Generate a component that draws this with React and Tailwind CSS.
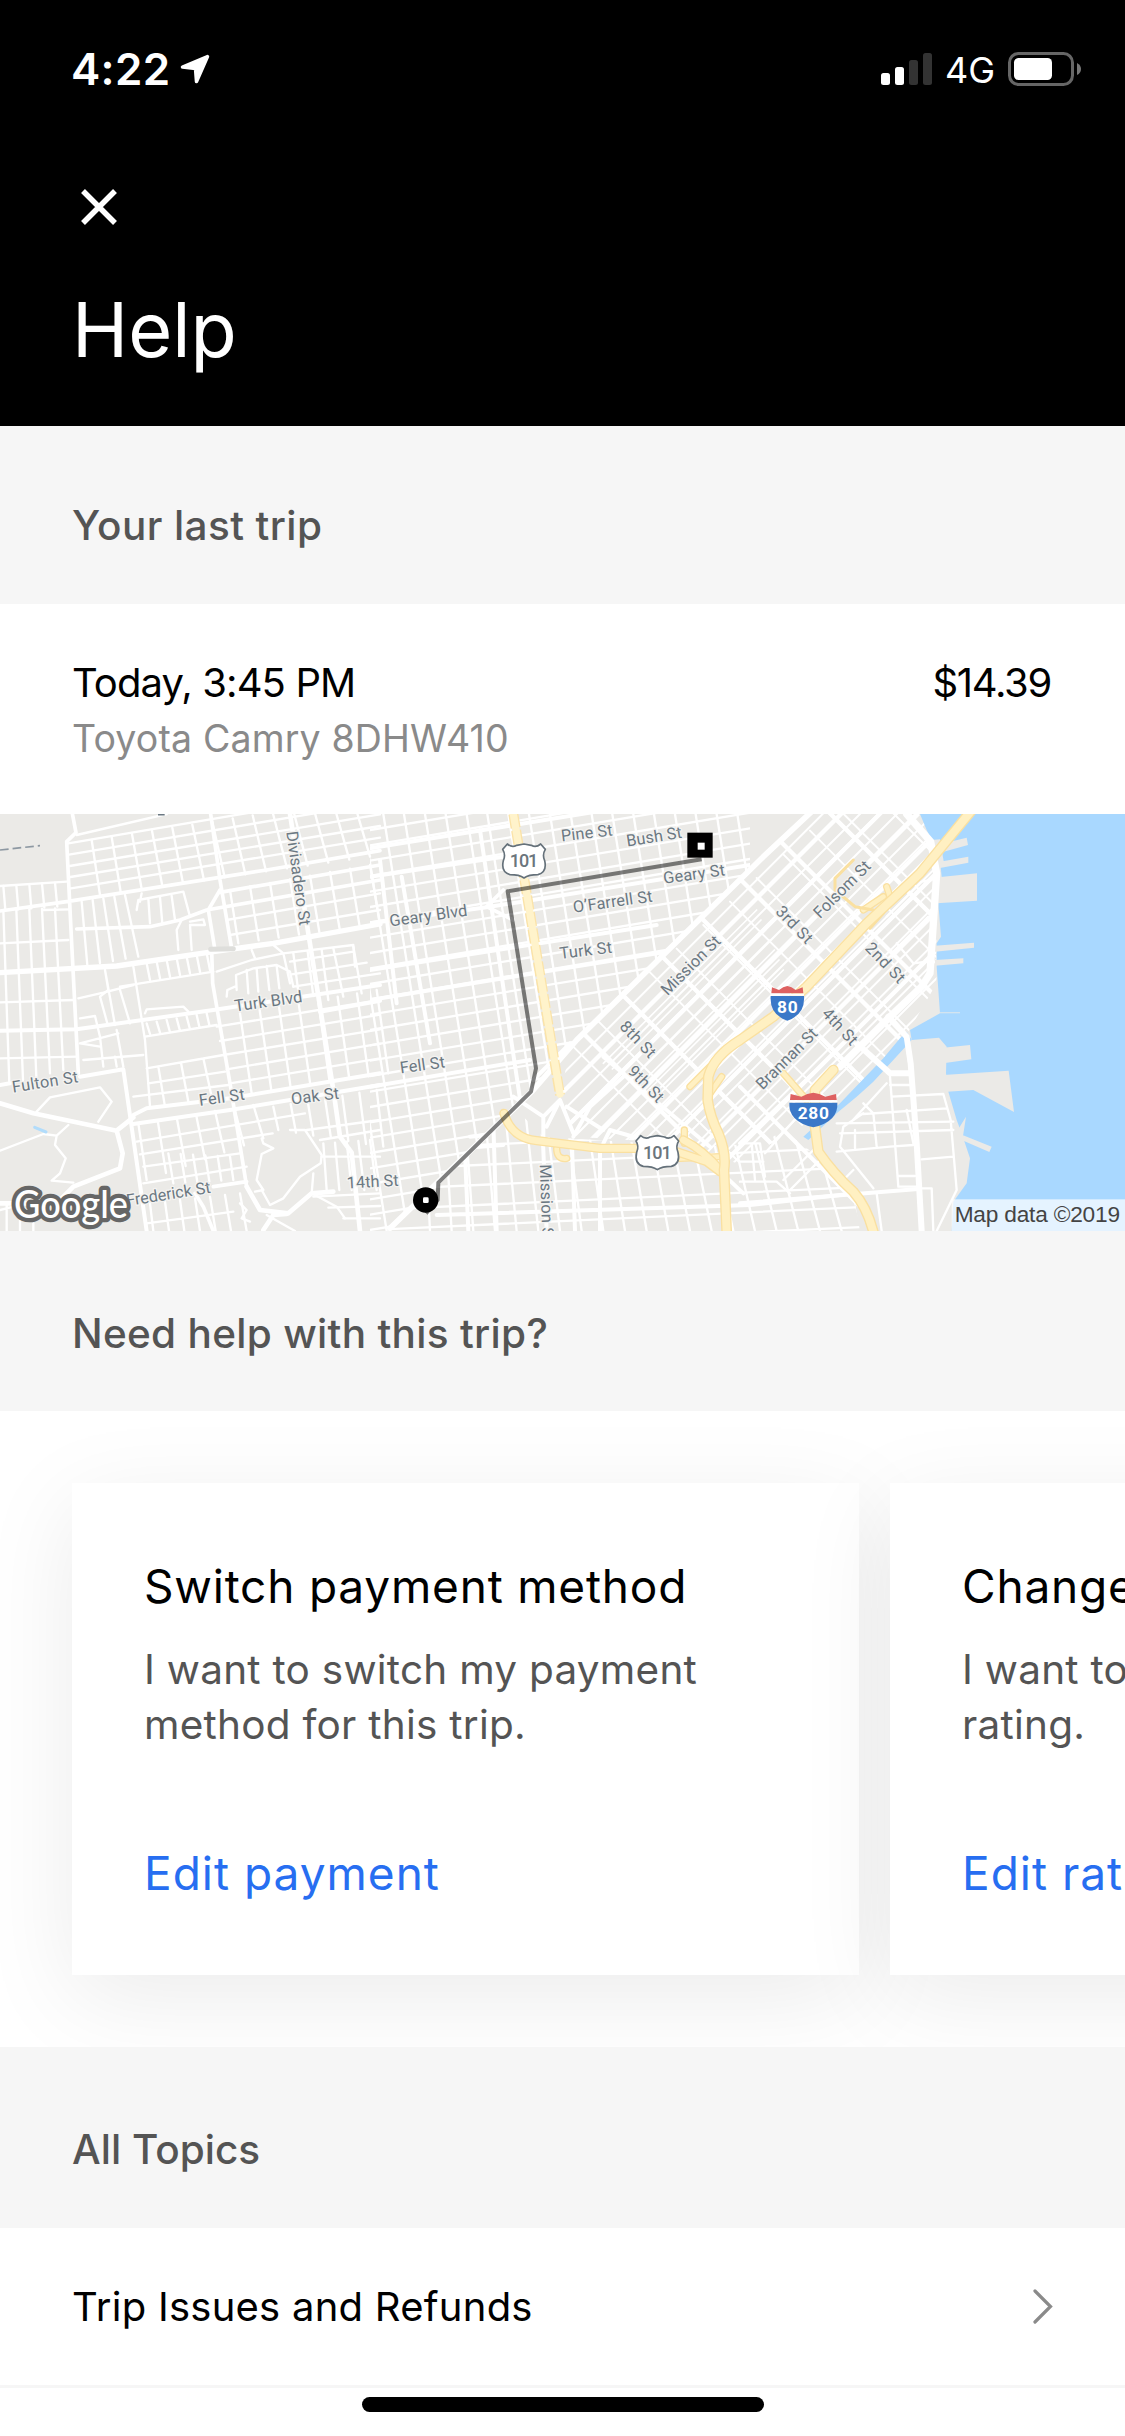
import React from "react";

const fam = (a, b, n) =>
  Array.from({ length: n + 1 }, (_, i) => {
    const p = a.map((v, k) => Math.round(v + ((b[k] - v) * i) / n));
    return `M${p[0]} ${p[1]}L${p[2]} ${p[3]}`;
  }).join("");

const S = ({ d, w = 8, c = "#fff" }) => (
  <path d={d} fill="none" stroke={c} strokeWidth={w} strokeLinejoin="round" strokeLinecap="round" />
);

const Label = ({ x, y, r = 0, w, size = 49, children }) => (
  <text
    transform={`translate(${x} ${y}) rotate(${r})`}
    textAnchor="middle"
    dominantBaseline="central"
    fontSize={size}
    textLength={w}
    fill="#6b7882"
    stroke="#f4f3f1"
    strokeWidth="8"
    strokeLinejoin="round"
    paintOrder="stroke"
  >
    {children}
  </text>
);

const Shield101 = ({ x, y }) => (
  <g transform={`translate(${x} ${y})`}>
    <path
      d="M-50 -50 Q-36 -38 -22 -46 L0 -50 L22 -46 Q36 -38 50 -50 L64 -34 Q54 -18 62 0 Q70 34 42 42 Q14 42 0 52 Q-14 42 -42 42 Q-70 34 -62 0 Q-54 -18 -64 -34 Z"
      fill="#fff" stroke="#65717a" strokeWidth="5" strokeLinejoin="round"
    />
    <text textAnchor="middle" y="20" fontSize="54" fontWeight="500" textLength="86" fill="#6b757c">101</text>
  </g>
);

const Interstate = ({ x, y, w, label, tl }) => (
  <g transform={`translate(${x} ${y})`}>
    <path d={`M${-w} -22 H${w} Q${w + 4} 34 0 52 Q${-w - 4} 34 ${-w} -22Z`} fill="#3a78c8" />
    <path d={`M${-w + 4} -48 L${-w / 2} -40 L${-w / 4} -48 L0 -52 L${w / 4} -48 L${w / 2} -40 L${w - 4} -48 L${w - 2} -30 H${-w + 2}Z`} fill="#de6161" />
    <path d={`M${-w} -26 H${w}`} stroke="#fff" strokeWidth="6" />
    <text textAnchor="middle" y="28" fontSize="52" fontWeight="700" textLength={tl} fill="#fff">{label}</text>
  </g>
);

const Highway = ({ d, w }) => (
  <>
    <S d={d} w={w + 8} c="#fae0a0" />
    <S d={d} w={w} c="#fff0c2" />
  </>
);

/* Trip map: three side-by-side tiles, 1110 units apart, three units per pixel */
function TripMap() {
  return (
    <svg viewBox="0 12 3375 1251" className="block h-[417px] w-full" fontFamily="Roboto, sans-serif">
      <defs>
        <clipPath id="west"><path d="M0 0H1140V170L560 750L490 840L60 1263H0Z" /></clipPath>
        <clipPath id="soma"><path d="M1140 175L600 715L570 860L620 980L930 1000L1100 1060L1310 940L1500 820L1600 690L1700 520V100L1640 0H1310Z" /></clipPath>
        <clipPath id="mission"><path d="M205 1120L430 890L520 980L1000 1010L1180 1000L1240 960L1330 1030L1450 1150L1470 1263H60Z" /></clipPath>
      </defs>
      <rect y="12" width="3375" height="1251" fill="#ebeae7" />

      {/* Western neighbourhoods */}
      <g>
        <S w={7} d={fam([10, 300, 28, 820], [165, 295, 190, 780], 4) + fam([10, 228, 16, 300], [165, 218, 172, 290], 4)} />
        <S w={7} d="M0 228L200 215M0 400L205 390M0 577L220 570M0 745L230 740M130 300L210 298" />
        <S w={7} d={fam([245, 275, 262, 465], [375, 255, 415, 440], 4)} />
        <S w={7} d={fam([205, 100, 1140, -58], [213, 235, 1140, 83], 4)} />
        <S w={7} d={fam([275, 90, 300, 255], [1060, -30, 1110, 140], 13)} />
        <S w={7} d={fam([690, 240, 715, 400], [1110, 165, 1140, 340], 7)} />
        <S w={7} d="M680 330L1140 250M690 375L1140 300M410 300L415 270L550 245L570 320M420 275L425 250M445 265L450 340M480 262L487 340M515 258L525 330M535 420L530 360L545 330M570 345L575 420M570 345L615 345L610 328L570 335" />
        <S w={7} d={fam([440, 460, 450, 510], [620, 430, 630, 480], 6) + "M360 530L640 485M235 565L310 548L400 525M400 470L435 690L450 890"} />
        <S w={7} d={fam([315, 480, 345, 645], [360, 540, 390, 640], 1) + "M315 480L325 540L300 560L322 640M435 610L440 598L550 590L565 605"} />
        <S w={7} d={fam([440, 640, 450, 672], [620, 610, 628, 645], 6) + "M435 680L650 645M240 625L285 618L300 680L310 770M240 700L355 670M250 750L430 735M350 660L370 770M240 700L300 710M345 740L350 770"} />
        <S w={7} d={fam([475, 770, 495, 890], [610, 745, 635, 860], 2) + "M440 775L670 735M445 820L675 785M400 860L685 825"} />
        <S w={7} d="M650 485L755 450L850 430L1060 405L1065 470M710 540L708 495L760 475L830 465L870 485L880 530M680 560L682 540L705 530M755 420L765 445M820 405L850 430L870 520M740 480L745 550M770 475L775 545M800 468L808 540M830 468L838 535" />
        <S w={7} d={fam([880, 430, 895, 545], [965, 420, 985, 570], 2) + fam([870, 455, 1060, 425], [880, 530, 1140, 490], 2) + "M1000 415L1030 560M1060 410L1085 550"} />
        <S w={7} d={fam([720, 610, 755, 850], [1130, 540, 1165, 790], 7)} />
        <S w={7} d={fam([650, 650, 1140, 570], [690, 820, 1140, 745], 4)} />
        <S w={7} d={fam([415, 940, 440, 1110], [760, 885, 790, 985], 6)} />
        <S w={7} d={fam([410, 995, 915, 910], [430, 1070, 720, 1030], 2) + fam([505, 1030, 520, 1120], [690, 1040, 700, 1110], 5)} />
        <S w={7} d={fam([820, 890, 835, 960], [1130, 840, 1150, 1010], 6) + "M920 960L1140 930M960 990L1140 960M965 1040H1140"} />
        <S w={7} d={fam([970, 1000, 980, 1140], [1110, 990, 1130, 1140], 4) + fam([450, 1180, 460, 1263], [720, 1150, 740, 1263], 6) + "M440 1240L700 1205M430 1120L740 1070"} />
        <S w={7} d={fam([940, 1160, 1140, 1150], [1030, 1225, 1140, 1225], 2) + "M20 1180V1263M0 1200L40 1190M60 1263V1225M100 1263V1240"} />
        <S w={7} d="M110 905L150 862L300 832L335 875L295 935M0 1022L130 972L170 977L205 945M170 977L165 1005L197 1045L180 1090L155 1112L220 1118" />
        <S w={7} d="M785 985L790 1000L820 1015L785 1032L770 1110L790 1140L765 1145M785 1140L810 1185L850 1165L900 1100L962 1060L965 1035L915 960L870 960M935 1150L940 1090M720 1180L740 1200L725 1225L750 1235M800 1215L885 1263M935 1150L1010 1190L1035 1225" />
        <S w={11} d="M632 12L660 210L695 415M660 240L625 300L645 420M635 420L638 520L690 820L740 1130M585 1150L610 1190L640 1263M640 1130L740 1115" />
        <S w={11} d="M230 357L450 350L540 330L620 300L1140 210M660 247L1140 165" />
        <S w={11} d="M0 303L200 275L640 205L800 180L1140 122M215 0L228 68L200 95L215 400L235 790" />
        <S w={7} d="M230 75L500 12" />
        <S w={16} d="M0 488L350 468L640 425L820 400L1140 342" />
        <S w={12} d="M0 662L230 658L640 600L1140 525M960 605L1140 572M240 800L370 778L440 1263M0 825L30 820" />
        <S w={12} d="M400 915L440 895L690 865L1140 790M400 942L690 900L870 870L1140 825" />
        <S w={14} d="M870 12L925 370L1000 840L1020 980L1055 1028L1080 1263" />
        <S w={14} d="M0 880L100 910L350 962L400 922M350 962L368 1030L360 1075L220 1130L170 1180L0 1180M740 1130L780 1200L865 1210L935 1150L1000 1145M860 1212L820 1215L790 1260" />
        <S w={15} d="M632 418L700 416" c="#dededb" />
        <S w={9} d="M104 952L138 966" c="#b1dcfb" />
        <path d="M0 120L120 107" stroke="#8d98a2" strokeWidth="5" strokeDasharray="26 12" fill="none" />
        <path d="M474 13H494" stroke="#6b7882" strokeWidth="7" />
      </g>

      {/* Downtown grid, south of Market, Mission */}
      <g transform="translate(1110 0)">
        <g clipPath="url(#west)">
          <S w={7} d={fam([0, 60, 1140, -130], [0, 1260, 1140, 1070], 26)} />
          <S w={7} d={fam([-150, 0, 50, 1263], [1100, 0, 1300, 1263], 20)} />
          <S w={12} d="M0 115L1140 -70M0 200L400 140M0 340L350 292L1140 165M0 570L400 505L1140 385M0 830L480 750M0 480L860 345M30 150L80 580M95 200L180 700M330 60L410 600L470 1000M300 980L500 960" />
          <S w={11} d="M350 290L430 330M350 290L400 240" />
        </g>
        <g clipPath="url(#soma)">
          <S w={6} d={fam([500, 870, 1500, -130], [500, 1760, 2000, 260], 16)} />
          <S w={5} d={fam([700, 760, 1160, 300], [860, 860, 1240, 480], 6)} />
          <S w={6} d={fam([600, 700, 1100, 1200], [1480, -80, 2080, 520], 11)} />
          <S w={13} d={fam([560, 865, 1600, -175], [560, 1560, 2000, 120], 6)} />
          <S w={13} d={fam([560, 590, 1160, 1190], [1340, -30, 1900, 530], 6)} />
        </g>
        <g clipPath="url(#mission)">
          <S w={7} d={fam([160, 850, 180, 1263], [1360, 850, 1480, 1263], 20)} />
          <S w={7} d={fam([0, 1020, 1500, 950], [0, 1320, 1500, 1250], 5)} />
          <S w={12} d="M285 1030L295 1263M370 940L380 1263M515 900L530 1263M605 980L615 1263M690 1020L690 1263M200 1020L400 1005M200 1215L1140 1185L1500 1145" />
        </g>
        <S w={17} d="M60 1255L205 1115L490 840L620 690L1180 140L1330 0" />
        <S w={12} d="M430 860L520 920L570 870L610 970M520 920V990M570 870L530 950M490 810L600 700M700 1000L720 960L860 1000M610 980L660 890L760 800" />
        <S w={12} d="M590 890L700 960M940 980L1120 1150M700 740L1020 1010" />
      </g>

      {/* Waterfront */}
      <g transform="translate(2220 0)">
        <path fill="#a9d8ff" d="M540 12L560 60L578 95L600 150L605 200L595 280L603 380L590 400L590 470L600 610L510 660L515 690L597 683L620 710L618 790L625 845L650 930L665 970L690 1045L680 1120L640 1175L635 1263H1160V12Z" />
        <path fill="#a9d8ff" d="M500 665L515 690L400 815L350 860L290 910L205 990L190 980L300 880L430 745L480 685Z" />
        <path fill="#ebeae7" d="M590 105L680 83L684 105L600 128ZM600 155L685 140V158L600 174ZM595 202L711 190V272L590 280ZM585 407L702 398V413L585 425ZM585 450L670 445V460L585 467ZM610 713L690 705L694 748L610 760ZM610 795L806 782L822 906L700 840L610 846ZM660 972L755 1010L748 1026L665 990ZM650 965L678 920L668 985ZM575 90L600 88L612 160H590Z" />
        <path d="M600 608H660" stroke="#d3e4f0" strokeWidth="4" />
        <S w={7} d="M450 800L475 1130M370 912L620 895M300 970L640 960M290 940L640 935M400 910L410 1010M345 960V1015M290 1025L450 1010L520 1005M450 825H510M455 860L610 852L632 930L650 1140L590 1263M545 1048L640 1040M475 1098H525M475 1130H540M370 880L400 910M330 940L440 820M370 910L310 950L300 1010L400 1135M340 1080L310 1110M545 1135H575L580 1263M500 900L520 1000" />
        <S w={7} d="M0 1000H60L75 1100M0 1055H70M35 1000L45 1110M75 1030L190 900M130 1110L220 1020M150 1140L250 1040M0 1115H110L150 1150M410 1150L425 1263" />
        <S w={12} d="M0 830L360 1190M0 1000L220 790M450 620L500 680L510 760" />
        <S w={22} d="M500 12L572 95L590 190L570 490L545 530L440 630L300 770" />
        <S w={18} d="M445 620L500 680L512 760L530 1000L545 1263M350 700L450 790H505" />
        <S w={12} d="M0 1180L535 1137" />
        <S w={7} d="M575 210L545 215L440 320M565 320L460 425M470 400L520 460L560 455" />
      </g>

      {/* Highways */}
      <g>
        <path d="M1540 12L1570 190L1680 855" fill="none" stroke="#fbe3a8" strokeWidth="30" strokeDasharray="42 8" />
        <S w={22} d="M1540 12L1570 190L1680 852" c="#fff3cb" />
        <Highway w={14} d="M2070 830L2130 770M2165 800L2130 850M2350 790L2420 870M1670 1015Q1670 1050 1700 1045M2053 960V1000M2040 1045L2160 1040M2590 300L2650 260M2660 230L2670 260" />
        <S w={9} c="#fae0a0" d="M2560 150L2505 205V240L2565 290L2620 300M2610 355L2650 310" />
        <Highway w={20} d="M1512 910Q1535 985 1610 992L1800 1015H2000L2120 1055L2160 1085M2050 990Q2110 1020 2165 1085" />
        <Highway w={24} d="M2920 -5L2760 190L2600 340L2420 530L2320 620L2220 690Q2140 740 2125 800L2123 870Q2130 920 2155 970Q2180 1030 2172 1080L2180 1265" />
        <Highway w={24} d="M2500 780L2445 840L2445 950L2455 1025Q2500 1090 2560 1145Q2600 1190 2620 1265" />
      </g>

      {/* Labels */}
      <Label x={895} y={205} r={82} w={285}>Divisadero St</Label>
      <Label x={805} y={574} r={-8} w={205}>Turk Blvd</Label>
      <Label x={135} y={816} r={-9} w={200}>Fulton St</Label>
      <Label x={665} y={862} r={-8} w={138}>Fell St</Label>
      <Label x={945} y={858} r={-7} w={145}>Oak St</Label>
      <Label x={505} y={1152} r={-9} w={255}>Frederick St</Label>
      <Label x={1118} y={1115} r={-3} w={156}>14th St</Label>
      <Label x={1285} y={317} r={-8} w={235}>Geary Blvd</Label>
      <Label x={1267} y={765} r={-8} w={136}>Fell St</Label>
      <Label x={1760} y={69} r={-7} w={155}>Pine St</Label>
      <Label x={1962} y={80} r={-9} w={168}>Bush St</Label>
      <Label x={2082} y={192} r={-8} w={186}>Geary St</Label>
      <Label x={1838} y={275} r={-8} w={240}>O’Farrell St</Label>
      <Label x={1757} y={421} r={-7} w={158}>Turk St</Label>
      <Label x={2072} y={466} r={-45} w={230}>Mission St</Label>
      <Label x={1914} y={688} r={46} w={132}>8th St</Label>
      <Label x={1938} y={822} r={46} w={132}>9th St</Label>
      <Label x={1640} y={1180} r={88} w={235}>Mission St</Label>
      <Label x={2383} y={344} r={46} w={136}>3rd St</Label>
      <Label x={2526} y={238} r={-45} w={220}>Folsom St</Label>
      <Label x={2656} y={458} r={46} w={148}>2nd St</Label>
      <Label x={2520} y={650} r={47} w={132}>4th St</Label>
      <Label x={2360} y={746} r={-45} w={238}>Brannan St</Label>

      <Shield101 x={1572} y={152} />
      <Shield101 x={1972} y={1027} />
      <Interstate x={2362} y={580} w={50} label="80" tl={62} />
      <Interstate x={2440} y={900} w={72} label="280" tl={94} />

      {/* Route */}
      <path d="M2105 148L1523 244L1608 775L1593 845L1315 1118L1313 1170L1278 1210" fill="none" stroke="#000" strokeOpacity=".5" strokeWidth="12" strokeLinejoin="round" />
      <rect x="2062" y="68" width="76" height="75" />
      <rect x="2093" y="98" width="21" height="21" fill="#fff" />
      <circle cx="1277" cy="1170" r="38" />
      <rect x="1269" y="1162" width="17" height="17" rx="4" fill="#fff" />

      <text x="42" y="1224" fontFamily="Lato, sans-serif" fontSize="116" fontWeight="500" textLength="342" lengthAdjust="spacingAndGlyphs" fill="#fff" stroke="#666" strokeWidth="26" strokeLinejoin="round" paintOrder="stroke">Google</text>

      <rect x="2855" y="1168" width="520" height="95" fill="#fff" fillOpacity=".7" />
      <text x="2864" y="1237" fontFamily="Liberation Sans, sans-serif" fontSize="68" textLength="496" fill="#444">Map data ©2019</text>
    </svg>
  );
}

function StatusBar() {
  return (
    <div className="-mr-7 flex h-[138px] items-center justify-between">
      <div className="flex items-center gap-2.5">
        <span className="-ml-px text-[44px] leading-none font-semibold tracking-[0.3px]">4:22</span>
        <svg className="h-[30px] w-[30px]" viewBox="0 0 30 30" fill="#fff" stroke="#fff" strokeWidth="3.500" strokeLinejoin="round">
          <path d="M27.500 2.500L2.500 13L15.500 14.500L16.500 27.500Z" />
        </svg>
      </div>
      <div className="flex items-center">
        <svg className="h-8 w-[51px]" viewBox="0 0 51 32">
          <rect y="20" width="9" height="12" rx="2.500" fill="#fff" />
          <rect x="14" y="14" width="9" height="18" rx="2.500" fill="#fff" />
          <rect x="28" y="7" width="9" height="25" rx="2.500" fill="#333" />
          <rect x="42" width="9" height="32" rx="2.500" fill="#333" />
        </svg>
        <span className="ml-[13px] pt-0.5 text-[36px] leading-none">4G</span>
        <svg className="ml-[13px] h-[34px] w-[73px]" viewBox="0 0 73 34">
          <rect x="1.500" y="1.500" width="63" height="31" rx="9" fill="none" stroke="#666" strokeWidth="3" />
          <rect x="6" y="6" width="38" height="22" rx="4.500" fill="#fff" />
          <path d="M69 11Q73 13 73 17Q73 21 69 23Z" fill="#777" />
        </svg>
      </div>
    </div>
  );
}

function SectionTitle({ className, children }) {
  return (
    <div className={`flex items-center bg-[#f6f6f6] px-[72px] ${className}`}>
      <h2 className="text-[40.5px] leading-[56px] font-medium text-[#545454]">{children}</h2>
    </div>
  );
}

function HelpCard({ title, lines, action }) {
  return (
    <div className="h-[492px] w-[787px] shrink-0 bg-white px-[72px] pt-[73px] whitespace-nowrap shadow-[0_22px_90px_rgba(0,0,0,0.08)]">
      <h3 className="text-[46px] leading-[60px] tracking-[0.8px]">{title}</h3>
      <p className="mt-[26px] text-[40.5px] leading-[55px] tracking-[0.25px] text-[#545454]">
        {lines[0]}
        <br />
        {lines[1]}
      </p>
      <a className="mt-[91px] block text-[46px] leading-[60px] tracking-[1px] text-[#276ef1]">{action}</a>
    </div>
  );
}

export default function App() {
  return (
    <main className="h-[2436px] w-[1125px] overflow-hidden bg-white font-[Inter,sans-serif] font-[370] text-black">
      <header className="h-[426px] bg-black px-[72px] text-white">
        <StatusBar />
        <svg className="mt-[51px] ml-[9px] h-9 w-9" viewBox="0 0 36 36" stroke="#fff" strokeWidth="5.500">
          <path d="M2 2L34 34M34 2L2 34" />
        </svg>
        <h1 className="mt-[60px] text-[75.6px] leading-[90px]">Help</h1>
      </header>
      <SectionTitle className="h-[178px] pt-[21px] tracking-[0.4px]">Your last trip</SectionTitle>
      <section className="flex h-[210px] justify-between px-[72px] pt-[51px] text-[40px] leading-[56px]">
        <div>
          <p className="tracking-[-0.9px]">Today, 3:45 PM</p>
          <p className="text-[37.5px] tracking-[0.15px] text-[#8a8a8a]">Toyota Camry 8DHW410</p>
        </div>
        <p className="pr-0.5 tracking-[-1.3px]">$14.39</p>
      </section>
      <TripMap />
      <SectionTitle className="h-[180px] pt-[25px] tracking-[0.3px]">Need help with this trip?</SectionTitle>
      <section className="flex h-[636px] gap-[31px] overflow-hidden px-[72px] pt-[72px]">
        <HelpCard title="Switch payment method" lines={["I want to switch my payment", "method for this trip."]} action="Edit payment" />
        <HelpCard title="Change rating" lines={["I want to change my", "rating."]} action="Edit rating" />
      </section>
      <SectionTitle className="h-[181px] pt-6">All Topics</SectionTitle>
      <div className="flex h-[160px] items-center justify-between border-b-[3px] border-[#f6f6f6] px-[72px]">
        <span className="text-[40px] tracking-[0.25px]">Trip Issues and Refunds</span>
        <svg className="h-[35px] w-5" viewBox="0 0 20 35" fill="none" stroke="#8a8a8a" strokeWidth="3.200" strokeLinecap="round">
          <path d="M2 2L17.500 17.500L2 33" />
        </svg>
      </div>
      <div className="mx-auto mt-[9px] h-[15px] w-[402px] rounded-full bg-black" />
    </main>
  );
}
